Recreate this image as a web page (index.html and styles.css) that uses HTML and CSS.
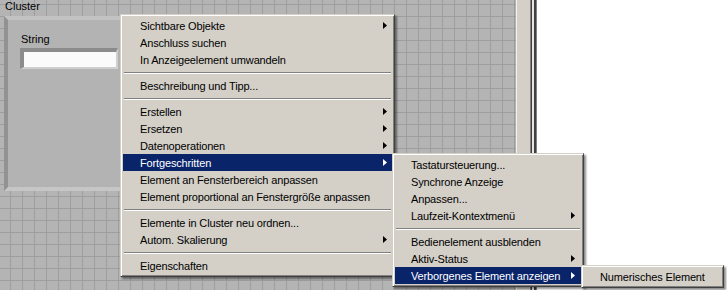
FILE: index.html
```html
<!DOCTYPE html>
<html lang="de">

<head>
    <meta charset="UTF-8">
    <title>Frontpanel</title>
    <link rel="stylesheet" href="styles.css">
</head>

<body>

    <div class="window">
        <div class="panel">
            <div class="cluster-label">Cluster</div>
            <div class="cluster">
                <div class="string-label">String</div>
                <div class="string-box"></div>
            </div>
        </div>
        <div class="scroll-strip"></div>
        <div class="splitter"></div>
        <div class="blank"></div>
    </div>

    <!-- Kontextmenü -->
    <div class="menu menu-main">
        <div class="item has-sub">Sichtbare Objekte</div>
        <div class="item">Anschluss suchen</div>
        <div class="item">In Anzeigeelement umwandeln</div>
        <div class="sep"></div>
        <div class="item">Beschreibung und Tipp...</div>
        <div class="sep"></div>
        <div class="item has-sub">Erstellen</div>
        <div class="item has-sub">Ersetzen</div>
        <div class="item has-sub">Datenoperationen</div>
        <div class="item has-sub active">Fortgeschritten</div>
        <div class="item">Element an Fensterbereich anpassen</div>
        <div class="item">Element proportional an Fenstergröße anpassen</div>
        <div class="sep"></div>
        <div class="item">Elemente in Cluster neu ordnen...</div>
        <div class="item has-sub">Autom. Skalierung</div>
        <div class="sep"></div>
        <div class="item">Eigenschaften</div>
    </div>

    <div class="menu menu-advanced">
        <div class="item">Tastatursteuerung...</div>
        <div class="item">Synchrone Anzeige</div>
        <div class="item">Anpassen...</div>
        <div class="item has-sub">Laufzeit-Kontextmenü</div>
        <div class="sep"></div>
        <div class="item">Bedienelement ausblenden</div>
        <div class="item has-sub">Aktiv-Status</div>
        <div class="item has-sub active">Verborgenes Element anzeigen</div>
    </div>

    <div class="menu menu-hidden">
        <div class="item">Numerisches Element</div>
    </div>

</body>

</html>
```

FILE: styles.css
```css
body {
    margin: 0;
    width: 727px;
    height: 290px;
    overflow: hidden;
    position: relative;
    font-family: "Liberation Sans", Arial, sans-serif;
    font-size: 11px;
    color: #000;
}

.window {
    display: flex;
    height: 290px;
}

/* front panel with grid */
.panel {
    width: 512px;
    padding-left: 4px;
    background-color: #b4b4b4;
    background-image:
        linear-gradient(to right, #9e9e9e 1px, transparent 1px),
        linear-gradient(to bottom, #9e9e9e 1px, transparent 1px);
    background-size: 12px 12px;
    background-position: 10px 4px;
}

.cluster-label {
    height: 16px;
    line-height: 13px;
    padding-left: 1px;
}

.cluster {
    width: 140px;
    height: 175px;
    box-sizing: border-box;
    background: #b3b3b3;
    border-style: solid;
    border-width: 4px;
    border-color: #c2c2c2 #c6c6c6 #c6c6c6 #929292;
    padding: 13px 0 0 12px;
}

.string-label {
    line-height: 13px;
    padding-left: 1px;
}

.string-box {
    width: 92px;
    height: 15px;
    margin-top: 2px;
    background: #fbfbfb;
    border-style: solid;
    border-width: 4px 2px 2px 4px;
    border-color: #8c8c8c #cfcfcf #cfcfcf #8c8c8c;
}

.scroll-strip {
    width: 13px;
    border-left: 1px solid #f2f2f2;
    background: #d4d0c8;
}

.splitter {
    width: 7px;
    background: linear-gradient(to right, #808080 0 1px, #404040 1px 2px, #e6e6e6 2px 4px, #404040 4px 6px, #808080 6px 7px);
}

.blank {
    flex: 1;
    background: #fff;
}

/* context menus */
.menu {
    position: absolute;
    background: #d4d0c8;
    border: 1px solid;
    border-color: #d4d0c8 #404040 #404040 #d4d0c8;
    box-shadow: inset 1px 1px #fff, inset -1px -1px #808080, 2px 2px 2px rgba(0, 0, 0, 0.45);
    padding: 2px;
    letter-spacing: -0.15px;
}

.menu-main {
    left: 120px;
    top: 14px;
    width: 269px;
}

.menu-advanced {
    left: 392px;
    top: 153px;
    width: 186px;
}

.menu-hidden {
    left: 581px;
    top: 265px;
    width: 137px;
}

.item {
    position: relative;
    height: 17px;
    line-height: 18px;
    padding-left: 17px;
    white-space: nowrap;
}

.menu-advanced .item,
.menu-hidden .item {
    padding-left: 16px;
}

.item.active {
    background: #0a246a;
    color: #fff;
}

.has-sub::after {
    content: "";
    position: absolute;
    right: 5px;
    top: 5px;
    width: 4px;
    height: 7px;
    background: currentColor;
    clip-path: polygon(0 0, 100% 50%, 0 100%);
}

.menu-advanced .has-sub::after {
    right: 6px;
}

.sep {
    height: 9px;
    position: relative;
}

.sep::before {
    content: "";
    position: absolute;
    left: 1px;
    right: 1px;
    top: 4px;
    height: 1px;
    background: #808080;
    border-bottom: 1px solid #fff;
}
```
